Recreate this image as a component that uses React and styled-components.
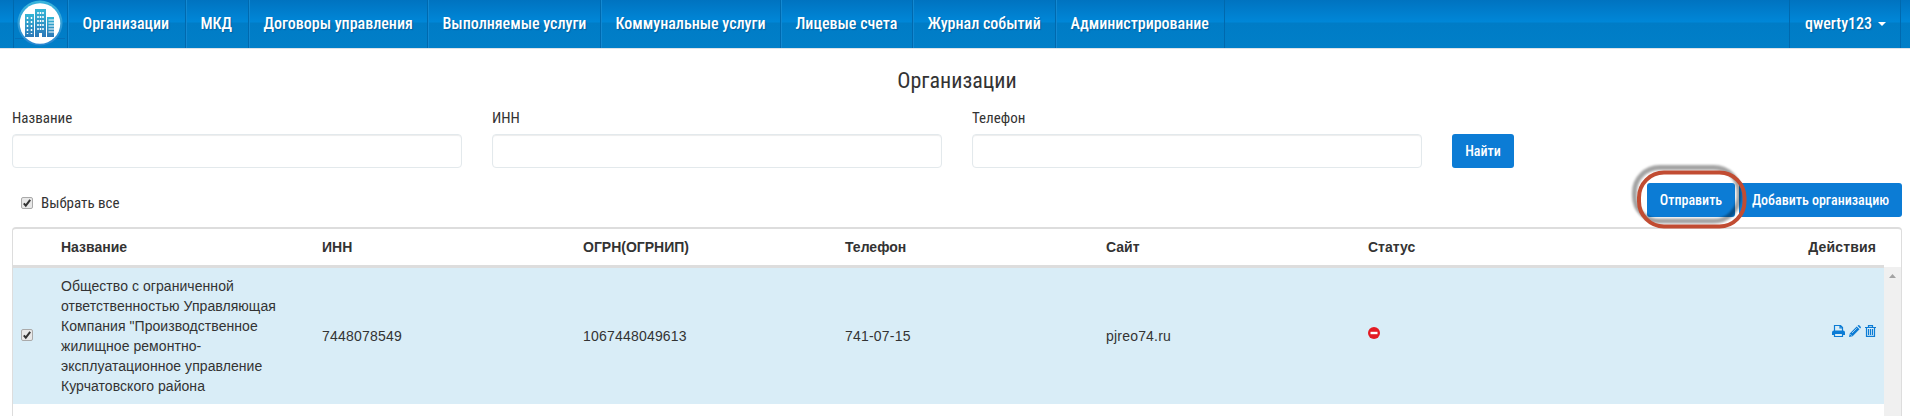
import React from "react";
import styled, { createGlobalStyle } from "styled-components";

const Global = createGlobalStyle`
  * { box-sizing: border-box; }
  html, body { margin: 0; background: #fff; overflow: hidden; }
  body { font-family: "Liberation Sans", Arial, sans-serif; font-size: 14px; color: #333; }
`;
const Page = styled.div`
  height: 416px; overflow: hidden; display: flex; flex-direction: column;
  > * { flex-shrink: 0; }
`;

const condensed = `font-family: "Roboto Condensed", Roboto, sans-serif; font-stretch: 75%; white-space: nowrap;`;

const Nav = styled.nav`
  height: 49px; display: flex; padding-left: 13px;
  border-bottom: 1px solid #dfe3e8;
  background: linear-gradient(#0073c0 0, #0087d8 22px, #007cc6 23px, #017fc8 48px);
`;
const NavItem = styled.a`
  ${condensed}
  width: ${(p) => p.$w}px; height: 48px; padding-left: 13.5px; line-height: 47px;
  font-size: 16px; font-weight: 500; color: #fff;
  text-shadow: 1px 1px 1px rgba(0, 30, 80, 0.3);
  border-left: 1px solid #1389d2; border-right: 1px solid #0069ae;
`;
const LogoBox = styled.div`
  width: 55px; height: 48px; flex: none;
  border-left: 1px solid #0069ae; border-right: 1px solid #0069ae;
`;
const User = styled(NavItem)`
  margin-left: auto; margin-right: 9px; padding-left: 15px; display: flex; align-items: center; gap: 6px;
  line-height: 46px; border-left-color: #0069ae;
`;
const Caret = styled.i`border: 4px solid transparent; border-bottom: 0; border-top-color: #fff;`;

const Title = styled.h1`
  ${condensed}
  margin: 20px 0 0; height: 24px; line-height: 24px; font-size: 22px; font-weight: 400; text-align: center; padding-left: 4px;
`;
const Search = styled.form`display: flex; gap: 30px; padding: 0 12px; height: 75px; align-items: flex-end;`;
const Field = styled.label`
  ${condensed}
  width: 450px; font-size: 15px; font-weight: 400; line-height: 20px; color: #333;
`;
const Input = styled.input`
  display: block; width: 100%; height: 34px; margin-top: 6px; border: 1px solid #e3e9ec; border-radius: 4px;
  box-shadow: inset 0 1px 1px rgba(0,0,0,.075); background: #fff;
`;
const Button = styled.button`
  ${condensed}
  width: ${(p) => p.$w}px; height: 34px; padding: 0 0 1px; border: 0; border-radius: 3px;
  background: #0c7cd5; color: #fff; font-size: 14px; font-weight: 500;
`;
const Toolbar = styled.div`
  height: 58px; margin-top: 1px; padding: 14px 8px 0 21px; display: flex; align-items: flex-start;
`;
const SelectAll = styled.label`
  ${condensed}
  display: flex; align-items: center; gap: 8px; font-size: 15px; font-weight: 400; color: #333;
  height: 40px; margin-right: auto;
`;
const Buttons = styled.div`display: flex; gap: 4px;`;
const Marked = styled.div`position: relative; z-index: 1;`;
const Ring = styled.svg`position: absolute; left: -20px; top: -24px; overflow: visible; pointer-events: none;`;

const Table = styled.section`
  margin: 0 8px 0 12px; border: 1px solid #ddd; border-top-width: 2px; border-radius: 4px 4px 0 0; border-bottom: 0;
`;
const cols = "48px 261px 261px 262px 261px 262px 261px 1fr";
const Head = styled.div`
  display: grid; grid-template-columns: ${cols}; height: 39px; width: 1871px; align-items: center;
  border-bottom: 3px solid #ddd; font-weight: 700;
`;
const Body = styled.div`display: flex; justify-content: space-between; height: 160px;`;
const Row = styled.div`
  display: grid; grid-template-columns: ${cols}; height: 136px; width: 1871px; align-items: center;
  background: #d9edf7; line-height: 20px;
`;
const Value = styled.span`letter-spacing: .2px;`;
const Check = styled.div`padding: 0 0 2px 8px; display: flex;`;
const Name = styled.div`width: 225px; letter-spacing: .06px;`;
const Right = styled.div`text-align: right; padding-right: 8px; letter-spacing: .15px;`;
const Actions = styled.div`display: flex; justify-content: flex-end; gap: 4px; padding: 0 8px 10px 0;`;
const Status = styled.div`padding-bottom: 6px; display: flex;`;
const Scroll = styled.div`
  width: 17px; background: #f0f0f0; display: flex; justify-content: center; padding-top: 7px; margin-top: -1px;
`;

const CheckMark = () => (
  <svg width="12" height="12" viewBox="0 0 12 12">
    <rect x=".5" y=".5" width="11" height="11" rx="1.5" fill="#e8e8e8" stroke="#aaa" />
    <path d="M2.8 6.3 4.8 8.6 9.2 2.9" fill="none" stroke="#333" strokeWidth="2" />
  </svg>
);
const Logo = () => (
  <svg width="53" height="48" viewBox="0 0 53 48">
    <defs>
      <linearGradient id="halo" x1="0" y1="0" x2="0" y2="1">
        <stop offset="0" stopColor="#39b5dc" /><stop offset="1" stopColor="#2a86d0" />
      </linearGradient>
      <linearGradient id="tower" x1="0" y1="0" x2="0" y2="1">
        <stop offset="0" stopColor="#35b6d6" /><stop offset="1" stopColor="#2b78b8" />
      </linearGradient>
    </defs>
    <path d="M1 38.5H51" stroke="#0869b3" opacity=".7" />
    <circle cx="26" cy="23" r="22.5" fill="url(#halo)" />
    <circle cx="26" cy="23.5" r="20.3" fill="#fff" />
    <g fill="url(#tower)">
      <path d="M11 14h9v23h-9z" /><path d="M21 9h11v28H21z" /><path d="M33 17h7v20h-7z" />
    </g>
    <g stroke="#fff" strokeWidth="1.500" strokeDasharray="2 2">
      <path d="M13.5 17v17M17.5 17v17M24 12v18M26.500 12v18M29 12v18" />
    </g>
    <path d="M34.500 20H40M34.500 23H40M34.500 26H40M34.500 29H40M34.500 32H40" stroke="#fff" />
    <path d="M25 33h3v4h-3z" fill="#fff" />
  </svg>
);
const Printer = () => (
  <svg width="13" height="12" viewBox="0 0 13 12" fill="none" stroke="#0c7cd5">
    <path d="M2.500 6V.5H8.500L10.500 2.500V6M8 .5V3H10.500" strokeWidth="1.200" />
    <path d="M0 7.500Q0 5.500 2 5.500H11Q13 5.500 13 7.500V10H10.500V8.500H2.500V10H0Z" fill="#0c7cd5" stroke="none" />
    <path d="M2.500 8.500H10.500V11.500H2.500Z" strokeWidth="1.200" />
  </svg>
);
const Pencil = () => (
  <svg width="12" height="12" viewBox="0 0 12 12" fill="#0c7cd5">
    <path d="M7.700 1.500 10.500 4.300 3.600 11.200 0 12 .8 8.400ZM8.500.8 9.200.2Q9.700-.2 10.300.3L11.700 1.700Q12.200 2.200 11.800 2.800L11.200 3.500Z" />
    <path d="M1.300 9.200 2.800 10.700M3 8 7.800 3.200" stroke="#d9edf7" strokeWidth=".7" />
  </svg>
);
const Trash = () => (
  <svg width="11" height="12" viewBox="0 0 11 12" fill="none" stroke="#0c7cd5" strokeWidth="1.200">
    <path d="M0 2.500H11M3.500 2V.6H7.500V2" />
    <path d="M1.500 3V11.400H9.500V3M3.500 4V10M5.500 4V10M7.500 4V10" />
  </svg>
);

const menu = [
  ["Организации", 118], ["МКД", 63], ["Договоры управления", 179], ["Выполняемые услуги", 173],
  ["Коммунальные услуги", 180], ["Лицевые счета", 132], ["Журнал событий", 143], ["Администрирование", 169],
];

export default function App() {
  return (
    <Page>
      <Global />
      <Nav>
        <LogoBox><Logo /></LogoBox>
        {menu.map(([t, w]) => <NavItem key={t} $w={w}>{t}</NavItem>)}
        <User $w={112}>qwerty123 <Caret /></User>
      </Nav>
      <Title>Организации</Title>
      <Search>
        <Field>Название<Input /></Field>
        <Field>ИНН<Input /></Field>
        <Field>Телефон<Input /></Field>
        <Button type="button" $w={62}>Найти</Button>
      </Search>
      <Toolbar>
        <SelectAll><CheckMark />Выбрать все</SelectAll>
        <Buttons>
          <Marked>
            <Button $w={88}>Отправить</Button>
            <Ring width="120" height="70">
              <defs><filter id="soft" x="-20%" y="-20%" width="140%" height="140%"><feGaussianBlur stdDeviation="1.3" /></filter></defs>
              <rect x="7.500" y="8.500" width="104.500" height="53.500" rx="25" fill="none" stroke="#000" strokeOpacity=".36" strokeWidth="5" filter="url(#soft)" />
              <rect x="12" y="13.500" width="105.500" height="54" rx="25" fill="none" stroke="#c14c32" strokeWidth="4" />
            </Ring>
          </Marked>
          <Button $w={163}>Добавить организацию</Button>
        </Buttons>
      </Toolbar>
      <Table>
        <Head>
          <span /><span>Название</span><span>ИНН</span><span>ОГРН(ОГРНИП)</span><span>Телефон</span><span>Сайт</span><span>Статус</span>
          <Right>Действия</Right>
        </Head>
        <Body>
          <Row>
            <Check><CheckMark /></Check>
            <Name>Общество с ограниченной ответственностью Управляющая Компания "Производственное жилищное ремонтно-эксплуатационное управление Курчатовского района</Name>
            <Value>7448078549</Value><Value>1067448049613</Value><Value>741-07-15</Value><Value>pjreo74.ru</Value>
            <Status>
              <svg width="12" height="12"><circle cx="6" cy="6" r="6" fill="#e31b23" /><path d="M2.500 4.800h7v2.400h-7z" fill="#fff" /></svg>
            </Status>
            <Actions><Printer /><Pencil /><Trash /></Actions>
          </Row>
          <Scroll><svg width="7" height="4"><path d="M0 4 3.500 0 7 4Z" fill="#a3a3a3" /></svg></Scroll>
        </Body>
      </Table>
    </Page>
  );
}
